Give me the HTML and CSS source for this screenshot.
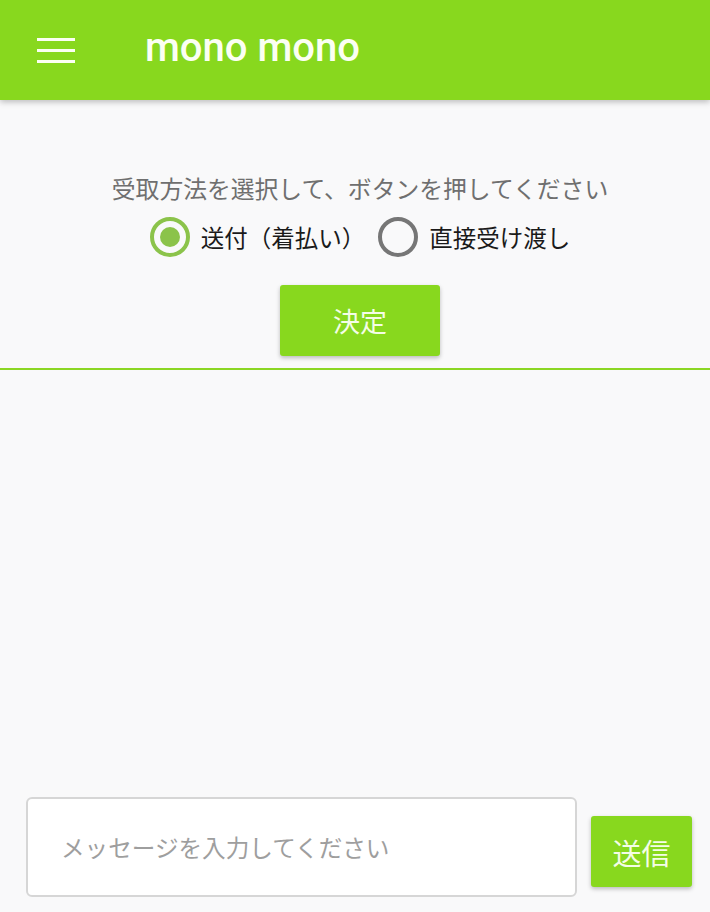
FILE: index.html
```html
<!DOCTYPE html>
<html lang="ja">
<head>
    <meta charset="UTF-8">
    <meta name="viewport" content="width=device-width, initial-scale=1.0">
    <title>mono mono</title>
    <link rel="stylesheet" href="styles.css">
</head>
<body>
    <div class="app">
        <header class="topbar">
            <button class="menu-btn" aria-label="menu">
                <span></span><span></span><span></span>
            </button>
            <h1 class="title">mono mono</h1>
        </header>

        <section class="choice">
            <p class="prompt">受取方法を選択して、ボタンを押してください</p>
            <div class="radio-row">
                <label class="radio">
                    <input type="radio" name="method" value="send" checked>
                    <span class="mark"></span>
                    <span class="radio-text">送付（着払い）</span>
                </label>
                <label class="radio">
                    <input type="radio" name="method" value="hand">
                    <span class="mark"></span>
                    <span class="radio-text">直接受け渡し</span>
                </label>
            </div>
            <button class="decide">決定</button>
        </section>
        <div class="divider"></div>

        <main class="chat"></main>

        <footer class="composer">
            <input type="text" class="message" placeholder="メッセージを入力してください">
            <button class="send">送信</button>
        </footer>
    </div>
</body>
</html>
```

FILE: styles.css
```css
* {
    box-sizing: border-box;
}

body {
    margin: 0;
    background-color: #f9f9fa;
    font-family: "Noto Sans CJK JP", "Noto Sans", Roboto, sans-serif;
    color: #212121;
}

.app {
    display: flex;
    flex-direction: column;
    height: 100vh;
}

.topbar {
    display: flex;
    align-items: center;
    height: 100px;
    padding-left: 37px;
    background-color: #88d81e;
    box-shadow: 0 2px 6px rgba(0, 0, 0, 0.25);
    position: relative;
    z-index: 1;
}

.menu-btn {
    display: flex;
    flex-direction: column;
    gap: 8px;
    width: 38px;
    padding: 0;
    margin: 0 70px 0 0;
    background: none;
    border: none;
}

.menu-btn span {
    display: block;
    height: 3px;
    background-color: #fbfff3;
}

.title {
    margin: 0 0 5px;
    font-family: Roboto, "Noto Sans", sans-serif;
    font-weight: 500;
    font-size: 40px;
    color: #fbfff3;
}

.choice {
    display: flex;
    flex-direction: column;
    align-items: center;
    padding: 70px 0 12px 10px;
}

.prompt {
    margin: 0;
    font-size: 23.8px;
    line-height: 36px;
    color: #6f6f6f;
}

.radio-row {
    display: flex;
    align-items: center;
    gap: 13px;
    height: 48px;
    margin-top: 7px;
}

.radio {
    display: flex;
    align-items: center;
    gap: 11px;
    font-size: 23.5px;
    color: #1a1a1a;
}

.radio input {
    display: none;
}

.radio .mark {
    width: 40px;
    height: 40px;
    border: 4px solid #767676;
    border-radius: 50%;
    display: flex;
    align-items: center;
    justify-content: center;
}

.radio input:checked + .mark {
    border-color: #8bc34a;
}

.radio input:checked + .mark::after {
    content: "";
    width: 20px;
    height: 20px;
    border-radius: 50%;
    background-color: #8bc34a;
}

.decide {
    margin-top: 24px;
    width: 160px;
    height: 71px;
    border: none;
    border-radius: 3px;
    background-color: #88d81e;
    color: #f4fde6;
    font-family: inherit;
    font-size: 27px;
    box-shadow: 0 2px 4px rgba(0, 0, 0, 0.25);
}

.divider {
    height: 2px;
    background-color: #8bd623;
}

.chat {
    flex: 1;
}

.composer {
    display: flex;
    align-items: flex-end;
    gap: 14px;
    padding: 0 18px 15px 26px;
}

.message {
    flex: 1;
    height: 100px;
    padding: 0 0 0 33px;
    border: 2px solid #d6d6d6;
    border-radius: 6px;
    background-color: #fff;
    font-family: inherit;
    font-size: 23.6px;
    outline: none;
}

.message::placeholder {
    color: #9e9e9e;
}

.send {
    width: 101px;
    height: 71px;
    margin-bottom: 10px;
    border: none;
    border-radius: 3px;
    background-color: #88d81e;
    color: #f4fde6;
    font-family: inherit;
    font-size: 29px;
    box-shadow: 0 2px 4px rgba(0, 0, 0, 0.25);
}
```
